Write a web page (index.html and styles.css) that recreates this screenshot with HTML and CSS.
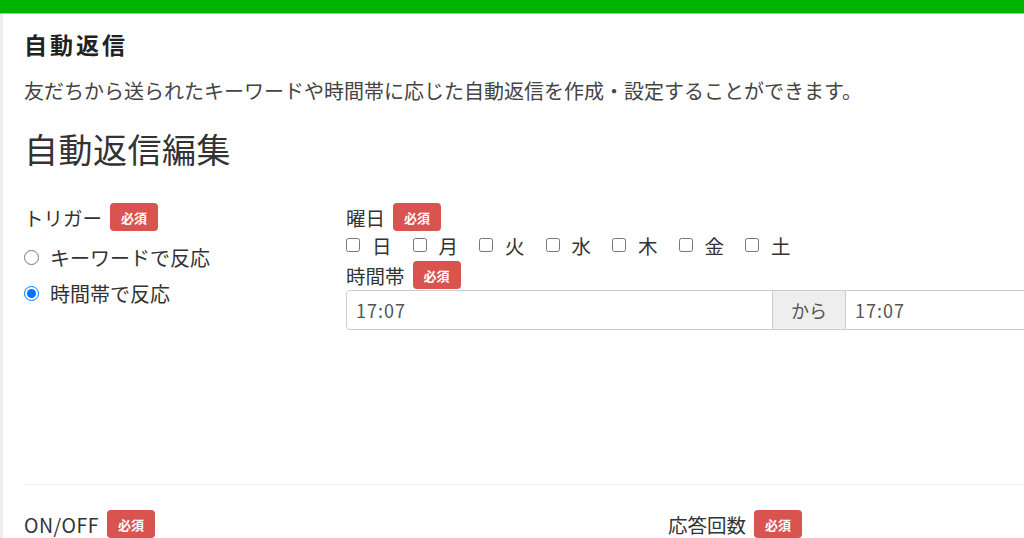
FILE: index.html
```html
<!DOCTYPE html>
<html lang="ja">
<head>
    <meta charset="UTF-8">
    <title>自動返信編集</title>
    <link rel="stylesheet" href="styles.css">
</head>
<body>
    <!-- 上部バー -->
    <div class="topbar"></div>

    <div class="page">
        <div class="side-edge"></div>

        <div class="main">
            <h1 class="page-title">自動返信</h1>
            <p class="page-desc">友だちから送られたキーワードや時間帯に応じた自動返信を作成・設定することができます。</p>
            <h2 class="edit-title">自動返信編集</h2>

            <!-- トリガー設定 -->
            <div class="form-row trigger-row">
                <div class="col-left">
                    <div class="field-label">トリガー <span class="badge">必須</span></div>
                    <label class="radio-item"><input type="radio" name="trigger"> キーワードで反応</label>
                    <label class="radio-item"><input type="radio" name="trigger" checked> 時間帯で反応</label>
                </div>
                <div class="col-right">
                    <div class="field-label">曜日 <span class="badge">必須</span></div>
                    <div class="week-list">
                        <label class="week-item"><input type="checkbox">日</label>
                        <label class="week-item"><input type="checkbox">月</label>
                        <label class="week-item"><input type="checkbox">火</label>
                        <label class="week-item"><input type="checkbox">水</label>
                        <label class="week-item"><input type="checkbox">木</label>
                        <label class="week-item"><input type="checkbox">金</label>
                        <label class="week-item"><input type="checkbox">土</label>
                    </div>
                    <div class="field-label">時間帯 <span class="badge">必須</span></div>
                    <div class="input-group">
                        <input class="time-input first" type="text" value="17:07">
                        <span class="input-addon">から</span>
                        <input class="time-input last" type="text" value="17:07">
                    </div>
                </div>
            </div>

            <hr class="divider">

            <div class="form-row bottom-row">
                <div class="col-half">
                    <div class="field-label onoff">ON/OFF <span class="badge">必須</span></div>
                </div>
                <div class="col-half">
                    <div class="field-label">応答回数 <span class="badge">必須</span></div>
                </div>
            </div>
        </div>
    </div>
</body>
</html>
```

FILE: styles.css
```css
* {
    margin: 0;
    padding: 0;
    box-sizing: border-box;
}

html, body {
    overflow: hidden;
}

body {
    width: 1024px;
    height: 538px;
    background: #ffffff;
    color: #333333;
    font-family: "Noto Sans CJK JP", "Noto Sans", sans-serif;
}

/* 上部バー */
.topbar {
    height: 14px;
    background-color: #00b500;
    border-bottom: 1px solid #86da86;
}

.page {
    display: flex;
    height: 524px;
}

.side-edge {
    width: 3px;
    flex-shrink: 0;
    background-color: #eeeeee;
}

.main {
    width: 1280px;
    flex-shrink: 0;
    padding-left: 21px;
}

.page-title {
    margin-top: 15px;
    font-size: 23px;
    line-height: 30px;
    letter-spacing: 3px;
    font-weight: 700;
    color: #222222;
}

.page-desc {
    margin-top: 17px;
    font-size: 20px;
    line-height: 30px;
    color: #444444;
}

.edit-title {
    margin-top: 21px;
    font-size: 34px;
    line-height: 44px;
    letter-spacing: 0.5px;
    font-weight: 400;
    color: #333333;
}

/* フォーム行 */
.form-row {
    display: flex;
}

.trigger-row {
    margin-top: 31px;
    height: 262px;
}

.col-left {
    width: 322px;
    flex-shrink: 0;
}

.col-right {
    width: 936px;
    flex-shrink: 0;
}

.field-label {
    display: flex;
    align-items: center;
    height: 30px;
    font-size: 19.5px;
    color: #333333;
}

.field-label.onoff {
    letter-spacing: 0.5px;
}

/* 必須バッジ */
.badge {
    display: inline-flex;
    align-items: center;
    justify-content: center;
    width: 48px;
    height: 28px;
    margin-left: 8px;
    border-radius: 4px;
    background-color: #d9534f;
    color: #ffffff;
    font-size: 13px;
    font-weight: 700;
    letter-spacing: 0;
}

.radio-item {
    display: flex;
    align-items: center;
    height: 36px;
    font-size: 20px;
    color: #333333;
}

.radio-item:first-of-type {
    margin-top: 7px;
}

.radio-item input {
    width: 15px;
    height: 15px;
    margin: 0 11px 0 0;
}

/* 曜日チェック */
.week-list {
    display: flex;
    align-items: center;
    gap: 21px;
    height: 26px;
    margin-bottom: 2px;
}

.week-item {
    display: flex;
    align-items: center;
    font-size: 19.5px;
}

.week-item input {
    width: 14px;
    height: 14px;
    margin: 0 12px 0 0;
}

/* 時間帯入力 */
.input-group {
    display: flex;
    height: 40px;
}

.time-input {
    height: 40px;
    padding: 0 9px;
    border: 1px solid #cccccc;
    font-family: "Noto Sans CJK JP", "Noto Sans", sans-serif;
    font-size: 18px;
    letter-spacing: 1px;
    color: #555555;
    background: #ffffff;
}

.time-input.first {
    width: 427px;
    border-radius: 4px 0 0 4px;
}

.time-input.last {
    width: 437px;
    border-radius: 0 4px 4px 0;
}

.input-addon {
    display: flex;
    align-items: center;
    justify-content: center;
    width: 72px;
    border-top: 1px solid #cccccc;
    border-bottom: 1px solid #cccccc;
    background-color: #eeeeee;
    font-size: 18px;
    color: #555555;
}

.divider {
    height: 0;
    margin-top: 20px;
    border: none;
    border-top: 1px solid #eeeeee;
}

.bottom-row {
    margin-top: 24px;
}

.col-half {
    width: 644px;
    flex-shrink: 0;
}
```
